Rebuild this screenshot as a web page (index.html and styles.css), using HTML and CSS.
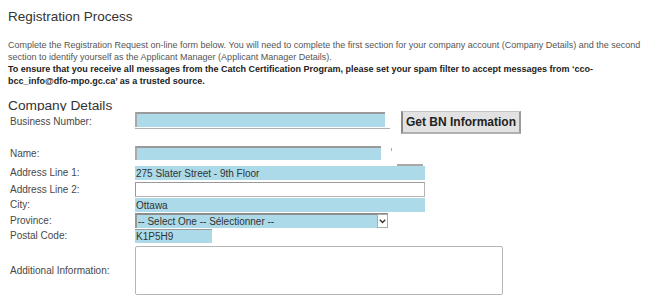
FILE: index.html
```html
<!DOCTYPE html>
<html lang="en">
<head>
  <meta charset="UTF-8" />
  <title>Registration Process</title>
  <link rel="stylesheet" href="styles.css">
</head>
<body>
  <div class="page">
    <h1 class="page-title">Registration Process</h1>
    <p class="intro">Complete the Registration Request on-line form below. You will need to complete the first section for your company account (Company Details) and the second<br>section to identify yourself as the Applicant Manager (Applicant Manager Details).<br><strong>To ensure that you receive all messages from the Catch Certification Program, please set your spam filter to accept messages from ‘cco-<br>bcc_info@dfo-mpo.gc.ca’ as a trusted source.</strong></p>

    <!-- Company Details -->
    <form class="reg-form" onsubmit="return false">
      <h2 class="section-title">Company Details</h2>

      <div class="row row-bn">
        <label class="field-label" for="bn">Business Number:</label>
        <span class="bn-wrap"><input type="text" id="bn" class="field field-bn" /></span>
        <button type="button" class="bn-btn">Get BN Information</button>
      </div>

      <div class="row row-name">
        <label class="field-label" for="name">Name:</label>
        <input type="text" id="name" class="field field-name" />
        <span class="req-mark"></span>
        <span class="edge-line"></span>
      </div>

      <div class="row row-addr1">
        <label class="field-label" for="addr1">Address Line 1:</label>
        <input type="text" id="addr1" class="field field-wide" value="275 Slater Street - 9th Floor" />
      </div>

      <div class="row row-addr2">
        <label class="field-label" for="addr2">Address Line 2:</label>
        <input type="text" id="addr2" class="field field-wide field-empty" />
      </div>

      <div class="row row-city">
        <label class="field-label" for="city">City:</label>
        <input type="text" id="city" class="field field-wide" value="Ottawa" />
      </div>

      <div class="row row-prov">
        <label class="field-label" for="province">Province:</label>
        <span class="select-wrap">
          <select id="province" class="field field-select">
            <option>-- Select One -- Sélectionner --</option>
            <option>Ontario</option>
            <option>Quebec</option>
          </select>
          <span class="select-arrow">
            <svg width="7" height="5" viewBox="0 0 7 5"><path d="M0.8 0.8 L3.5 3.6 L6.2 0.8" fill="none" stroke="#333" stroke-width="1.4"/></svg>
          </span>
        </span>
      </div>

      <div class="row row-postal">
        <label class="field-label" for="postal">Postal Code:</label>
        <input type="text" id="postal" class="field field-postal" value="K1P5H9" />
      </div>

      <div class="row row-info">
        <label class="field-label" for="info">Additional Information:</label>
        <textarea id="info" class="field-area"></textarea>
      </div>
    </form>
  </div>
</body>
</html>
```

FILE: styles.css
```css
* {
  box-sizing: border-box;
}

body {
  margin: 0;
  font-family: "Liberation Sans", Arial, sans-serif;
  background: #fff;
  color: #444;
}

.page {
  padding: 0 8px;
}

.page-title {
  margin: 9px 0 0;
  font-size: 13.5px;
  line-height: 16px;
  font-weight: normal;
  color: #333;
}

.intro {
  margin: 14px 0 0;
  font-size: 9px;
  line-height: 12px;
  color: #555;
  white-space: nowrap;
}

.intro strong {
  color: #222;
}

.section-title {
  margin: 12px 0 0;
  height: 12px;
  overflow: hidden;
  font-size: 13.7px;
  line-height: 13px;
  font-weight: normal;
  color: #333;
}

.row {
  display: flex;
  align-items: center;
}

.field-label {
  flex: none;
  width: 127px;
  padding-left: 2px;
  font-size: 10px;
  color: #484848;
}

.field {
  margin: 0;
  padding: 0 1px;
  height: 14px;
  border: 0;
  outline: none;
  background: #acdae8;
  font-family: "Liberation Sans", Arial, sans-serif;
  font-size: 10px;
  color: #333;
}

/* business number */
.row-bn {
  align-items: flex-start;
}

.row-bn .field-label {
  margin-top: 3px;
  line-height: 15px;
}

.bn-wrap {
  display: block;
  width: 255px;
  margin-top: 1px;
  padding-bottom: 1px;
  border-bottom: 1px solid #b0b0b0;
}

.field-bn {
  display: block;
  width: 250px;
  height: 15px;
  border-top: 2px solid #9a9a9a;
  border-left: 2px solid #a8a8a8;
}

.bn-btn {
  width: 120px;
  height: 23px;
  margin-left: 11px;
  padding: 0;
  background: #e2e2e2;
  border: 1px solid #c4c4c4;
  border-left: 2px solid #8a8a8a;
  border-right: 2px solid #9a9a9a;
  border-bottom: 2px solid #b0b0b0;
  font-family: "Liberation Sans", Arial, sans-serif;
  font-size: 12px;
  font-weight: bold;
  color: #222;
  cursor: pointer;
}

/* name */
.row-name {
  margin-top: 12px;
  height: 20px;
  align-items: flex-start;
}

.row-name .field-label {
  line-height: 16px;
}

.field-name {
  width: 246px;
  border-top: 2px solid #999;
  border-left: 2px solid #aaa;
}

.req-mark {
  width: 1px;
  height: 3px;
  margin: 2px 0 0 10px;
  background: #aaa;
}

.edge-line {
  align-self: flex-end;
  width: 26px;
  height: 2px;
  margin-left: 5px;
  background: #a8a8a8;
}

.field-wide {
  width: 290px;
}

.row-addr1 .field-label,
.row-city .field-label,
.row-postal .field-label {
  line-height: 14px;
}

.row-addr2 {
  margin-top: 2px;
}

.field-empty {
  height: 15px;
  background: #fff;
  border: 1px solid #b5b5b5;
  border-top-color: #999;
  border-left-color: #999;
}

.row-city {
  margin-top: 1px;
}

/* province */
.row-prov {
  margin-top: 1px;
}

.select-wrap {
  position: relative;
  display: block;
  width: 253px;
  height: 15px;
}

.field-select {
  display: block;
  width: 253px;
  height: 15px;
  padding: 0 1px;
  border-top: 2px solid #8c8c8c;
  border-left: 2px solid #999;
  appearance: none;
  -webkit-appearance: none;
  line-height: 12px;
}

.select-arrow {
  position: absolute;
  top: 1px;
  right: 0;
  width: 11px;
  height: 14px;
  display: flex;
  align-items: center;
  justify-content: center;
  background: #fff;
  border: 1px solid #aaa;
}

/* postal code */
.row-postal {
  margin-top: 1px;
}

.field-postal {
  width: 77px;
  border-top: 1px solid #999;
}

/* additional information */
.row-info {
  margin-top: 3px;
}

.field-area {
  width: 368px;
  height: 49px;
  margin: 0;
  border: 1px solid #b5b5b5;
  border-radius: 2px;
  background: #fff;
  resize: none;
  outline: none;
}
```
